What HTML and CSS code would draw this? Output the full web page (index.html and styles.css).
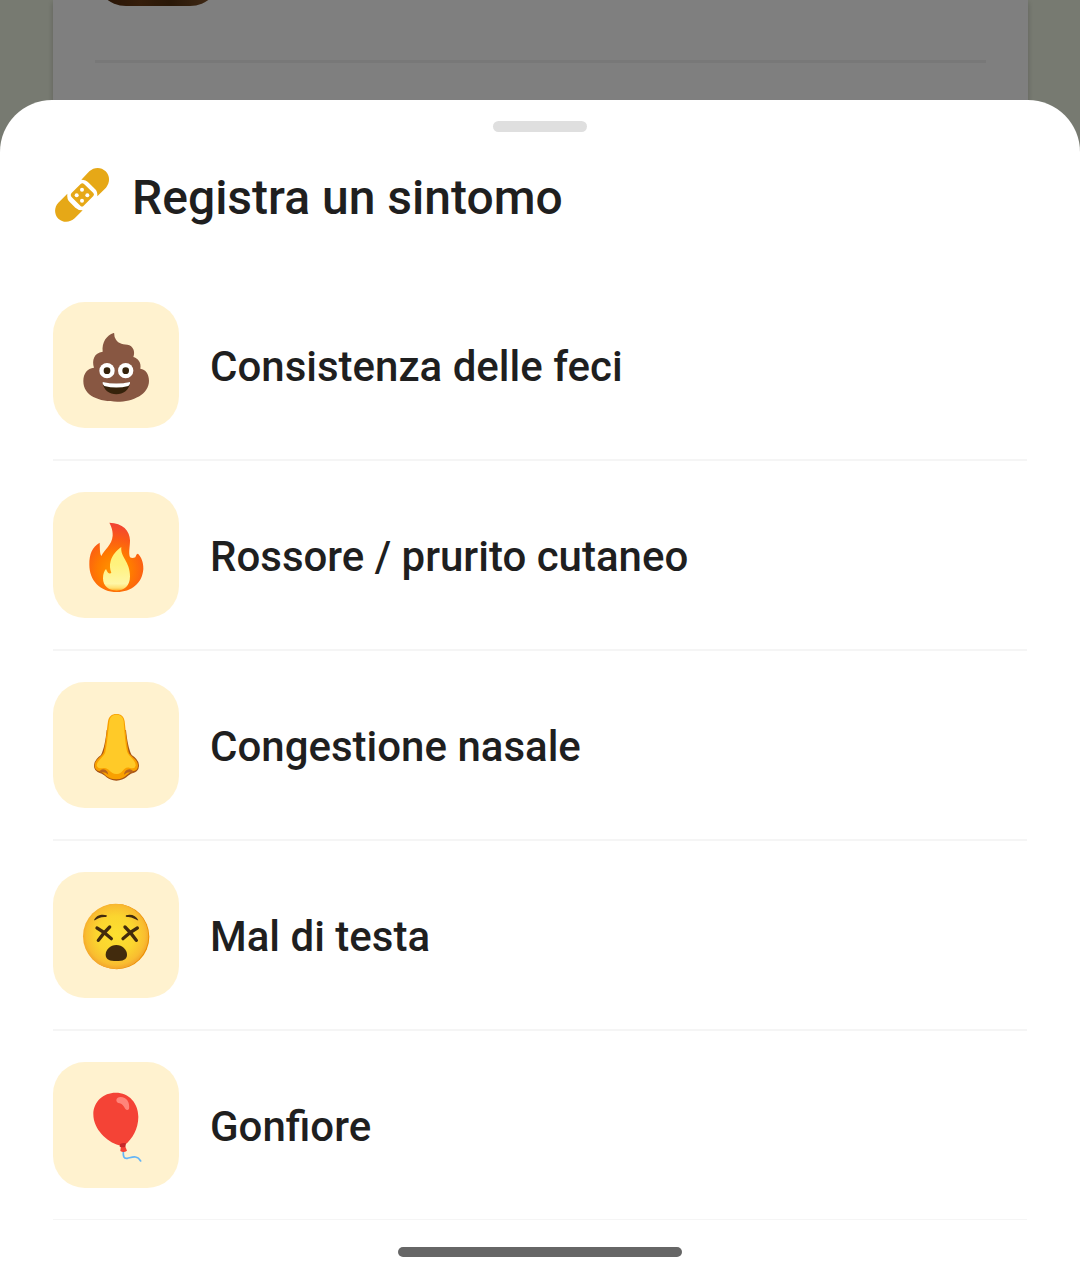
FILE: index.html
```html
<!DOCTYPE html>
<html lang="it">
<head>
    <meta charset="UTF-8">
    <meta name="viewport" content="width=device-width, initial-scale=1.0">
    <title>Registra un sintomo</title>
    <link rel="stylesheet" href="styles.css">
</head>
<body>
<div class="page">
    <div class="page-card">
        <div class="page-photo"></div>
        <hr class="page-divider">
    </div>
</div>
<div class="backdrop"></div>

<main class="sheet" role="dialog" aria-labelledby="sheetTitle">
    <div class="sheet-handle"></div>
    <div class="sheet-header">
        <svg class="header-icon" viewBox="24 33 174 174" aria-hidden="true">
            <g fill="#e6a817">
                <path d="M109 74 L133 49 C147 36 168 35 182 49 C195 62 196 83 183 98 L157 124 Q158 109 150 102 L131 83 Q123 74 109 74Z"/>
                <path d="M67 116 L40 143 C27 157 27 177 40 191 C54 204 75 203 89 190 L113 166 Q99 166 91 158 L74 141 Q65 132 67 116Z"/>
                <path d="M107 87 Q112 82 117 87 L145 114 Q149 119 145 123 L116 152 Q111 157 106 152 L79 125 Q75 120 79 115Z"/>
            </g>
            <g fill="#fff">
                <circle cx="111" cy="104" r="6"/>
                <circle cx="95" cy="121" r="6"/>
                <circle cx="127" cy="121" r="6"/>
                <circle cx="111" cy="137" r="6"/>
            </g>
        </svg>
        <h1 id="sheetTitle">Registra un sintomo</h1>
    </div>

    <ul class="symptom-list">
        <li class="symptom-item">
            <button type="button" class="symptom-button">
                <span class="symptom-icon">
                    <svg viewBox="84 81 228 228" aria-hidden="true">
                        <path fill="#885742" d="M191 99 C194 98 192 107 195 113 C201 129 215 132 232 134 C250 137 256 155 250 171 C263 174 275 188 271 206 C287 208 297 222 297 242 C297 283 249 305 202 305 C147 305 100 288 100 243 C100 220 112 205 132 203 C125 181 132 158 158 155 C155 126 170 106 191 99Z"/>
                        <circle cx="171" cy="212" r="23" fill="#fff"/>
                        <circle cx="227" cy="212" r="23" fill="#fff"/>
                        <circle cx="171" cy="212" r="10" fill="#35220b"/>
                        <circle cx="227" cy="212" r="10" fill="#35220b"/>
                        <path fill="#35220b" d="M158 247 Q199 257 240 247 C239 270 219 283 199 283 C179 283 159 270 158 247Z"/>
                        <path fill="#fff" d="M158 246 Q199 255 240 246 Q242 254 235 258 Q199 267 163 258 Q156 253 158 246Z"/>
                    </svg>
                </span>
                <span class="symptom-name">Consistenza delle feci</span>
            </button>
        </li>
        <li class="symptom-item">
            <button type="button" class="symptom-button">
                <span class="symptom-icon">
                    <svg viewBox="84 81 228 228" aria-hidden="true">
                        <defs>
                            <radialGradient id="flameOuter" gradientUnits="userSpaceOnUse" cx="193" cy="240" r="145">
                                <stop offset="0" stop-color="#ff9800"/>
                                <stop offset="0.35" stop-color="#ff7b00"/>
                                <stop offset="0.65" stop-color="#fb5b16"/>
                                <stop offset="1" stop-color="#f04038"/>
                            </radialGradient>
                            <linearGradient id="flameInner" x1="0" y1="0" x2="0" y2="1">
                                <stop offset="0" stop-color="#fff176"/>
                                <stop offset="0.4" stop-color="#fff27d"/>
                                <stop offset="0.84" stop-color="#fff6a6"/>
                                <stop offset="0.94" stop-color="#ffdf70"/>
                                <stop offset="1" stop-color="#ffa820"/>
                            </linearGradient>
                        </defs>
                        <path fill="url(#flameOuter)" d="M178 98 C218 98 240 123 240 151 C240 171 235 188 240 202 Q247 206 256 202 C258 196 260 191 264 191 C273 200 281 216 280 237 C277 280 244 306 201 306 C150 306 118 270 118 224 C118 191 127 171 149 158 C150 176 149 191 154 198 C163 178 186 165 188 137 C189 120 182 105 178 98Z"/>
                        <path fill="url(#flameInner)" d="M214 171 C210 201 240 214 240 259 C240 288 223 302 200 302 C176 302 159 288 159 265 C159 252 162 244 168 237 C173 249 178 253 184 249 C180 237 178 226 182 213 C187 195 200 181 214 171Z"/>
                    </svg>
                </span>
                <span class="symptom-name">Rossore / prurito cutaneo</span>
            </button>
        </li>
        <li class="symptom-item">
            <button type="button" class="symptom-button">
                <span class="symptom-icon">
                    <svg viewBox="84 81 228 228" aria-hidden="true">
                        <path fill="#a65414" d="M170 150 L228 150 C231 180 236 208 245 225 Q267 239 267 258 Q266 275 247 280 C236 282 226 302 199 302 C173 302 163 282 151 280 Q132 274 132 258 Q132 240 153 225 C162 208 167 180 170 150Z"/>
                        <path fill="#f9a000" d="M199 102 C214 102 222 110 224 124 C227 153 231 197 236 216 C239 229 264 237 264 257 C264 267 258 273 248 274 C234 275 230 298 199 298 C168 298 163 277 150 274 C140 272 134 267 134 257 C134 237 157 230 161 216 C167 195 170 150 174 124 C176 110 185 102 199 102Z"/>
                        <path fill="#ffca28" d="M199 104 C213 104 219 111 221 124 C223 153 226 197 232 217 C236 229 258 242 257 257 Q254 269 238 263 C219 259 219 284 199 282 C179 281 178 262 160 264 Q144 267 140 257 C140 242 163 230 166 216 C171 194 175 149 178 124 C180 111 186 104 199 104Z"/>
                        <path fill="#b8641c" d="M149 273 Q155 265 166 269 Q174 273 175 284 Q163 273 147 279Z"/>
                        <path fill="#b8641c" d="M249 273 Q242 265 232 269 Q223 273 222 284 Q235 273 251 279Z"/>
                    </svg>
                </span>
                <span class="symptom-name">Congestione nasale</span>
            </button>
        </li>
        <li class="symptom-item">
            <button type="button" class="symptom-button">
                <span class="symptom-icon">
                    <svg viewBox="84 81 228 228" aria-hidden="true">
                        <defs>
                            <radialGradient id="faceFill" cx="0.5" cy="0.48" r="0.53">
                                <stop offset="0" stop-color="#fde030"/>
                                <stop offset="0.55" stop-color="#fbd52f"/>
                                <stop offset="0.85" stop-color="#f9bd30"/>
                                <stop offset="1" stop-color="#f2a12b"/>
                            </radialGradient>
                        </defs>
                        <circle cx="200" cy="200" r="98" fill="#eb8f00"/>
                        <circle cx="197" cy="199" r="98" fill="url(#faceFill)"/>
                        <path fill="#422b0d" d="M132 151 C137 135 157 131 170 136 Q172 140 168 141 C153 140 144 144 135 151Z"/>
                        <path fill="#422b0d" d="M265 151 C259 136 242 131 228 136 Q225 140 230 141 C245 141 252 145 262 151Z"/>
                        <g fill="none" stroke="#422b0d" stroke-width="10" stroke-linecap="round">
                            <path d="M141 174 Q162 185 184 206"/>
                            <path d="M179 171 Q161 188 145 211"/>
                            <path d="M262 174 Q241 185 219 206"/>
                            <path d="M225 171 Q243 188 259 211"/>
                        </g>
                        <path fill="#422b0d" d="M199 225 C217 225 231 239 231 254 C231 269 218 273 199 273 C180 273 167 269 167 254 C167 239 181 225 199 225Z"/>
                    </svg>
                </span>
                <span class="symptom-name">Mal di testa</span>
            </button>
        </li>
        <li class="symptom-item">
            <button type="button" class="symptom-button">
                <span class="symptom-icon">
                    <svg viewBox="84 81 228 228" aria-hidden="true">
                        <path fill="none" stroke="#64b5f6" stroke-width="5" stroke-linecap="round" d="M220 273 C219 288 221 297 232 295 C246 292 261 284 272 303"/>
                        <path fill="#f44336" d="M213 257 L225 257 L231 272 Q221 279 211 273Z"/>
                        <path fill="#f44336" d="M197 98 C237 98 265 129 265 170 C265 207 247 237 224 255 Q217 261 207 256 C170 246 130 207 130 163 C130 125 160 98 197 98Z"/>
                        <path fill="#c62828" d="M210 252 Q219 247 228 250 L226 260 Q218 263 209 260Z"/>
                        <path fill="#ff847a" d="M199 120 C200 109 215 109 224 114 C236 120 239 136 237 147 Q232 153 226 147 C220 138 218 132 209 130 Q199 129 199 120Z"/>
                    </svg>
                </span>
                <span class="symptom-name">Gonfiore</span>
            </button>
        </li>
    </ul>
    <div class="home-indicator"></div>
</main>
</body>
</html>
```

FILE: styles.css
```css
* {
    margin: 0;
    padding: 0;
    box-sizing: border-box;
}

body {
    font-family: Roboto, 'Liberation Sans', sans-serif;
    background: #eff5e3;
    color: #1f1f1f;
    height: 100vh;
    overflow: hidden;
}

.page {
    height: 100%;
    padding: 0 52px 0 53px;
}

.page-card {
    display: flow-root;
    height: 100%;
    padding: 0 42px;
    background: #ffffff;
    box-shadow: 0 2px 6px rgba(0, 0, 0, 0.2);
}

/* only the bottom edge of the photo is scrolled into view */
.page-photo {
    width: 126px;
    height: 126px;
    margin-top: -120px;
    border-radius: 31px;
    background: linear-gradient(90deg, #4a2508, #6a3a14 35%, #54300f 60%, #8a5a32);
}

.page-divider {
    height: 3px;
    margin-top: 54px;
    border: none;
    background: #f0f0f0;
}

.backdrop {
    position: fixed;
    inset: 0;
    background: rgba(0, 0, 0, 0.5);
}

.sheet {
    position: fixed;
    inset: 100px 0 0;
    display: flex;
    flex-direction: column;
    padding: 21px 53px 26px;
    background: #ffffff;
    border-radius: 52px 52px 0 0;
}

.sheet-handle {
    flex-shrink: 0;
    width: 94px;
    height: 11px;
    margin: 0 auto;
    border-radius: 6px;
    background: #dfdfdf;
}

.sheet-header {
    display: flex;
    align-items: center;
    gap: 21px;
    padding: 34px 0 47px;
}

.header-icon {
    width: 58px;
    height: 58px;
}

.sheet-header h1 {
    padding-top: 6px;
    font-size: 48px;
    line-height: 52px;
    font-weight: 500;
}

.symptom-list {
    flex: 1;
    min-height: 0;
    overflow: hidden;
    list-style: none;
}

.symptom-item {
    border-bottom: 2px solid #f5f5f5;
}

.symptom-button {
    display: flex;
    align-items: center;
    gap: 31px;
    width: 100%;
    padding: 31px 0;
    border: none;
    background: none;
    color: inherit;
    font: inherit;
    text-align: left;
    cursor: pointer;
}

.symptom-icon {
    display: flex;
    align-items: center;
    justify-content: center;
    width: 126px;
    height: 126px;
    border-radius: 32px;
    background: #fff2cf;
}

.symptom-icon svg {
    width: 76px;
    height: 76px;
}

.symptom-name {
    padding-top: 4px;
    font-size: 42px;
    line-height: 48px;
    font-weight: 500;
}

.home-indicator {
    flex-shrink: 0;
    width: 284px;
    height: 10px;
    margin: 27px auto 0;
    border-radius: 5px;
    background: #666666;
}
```
